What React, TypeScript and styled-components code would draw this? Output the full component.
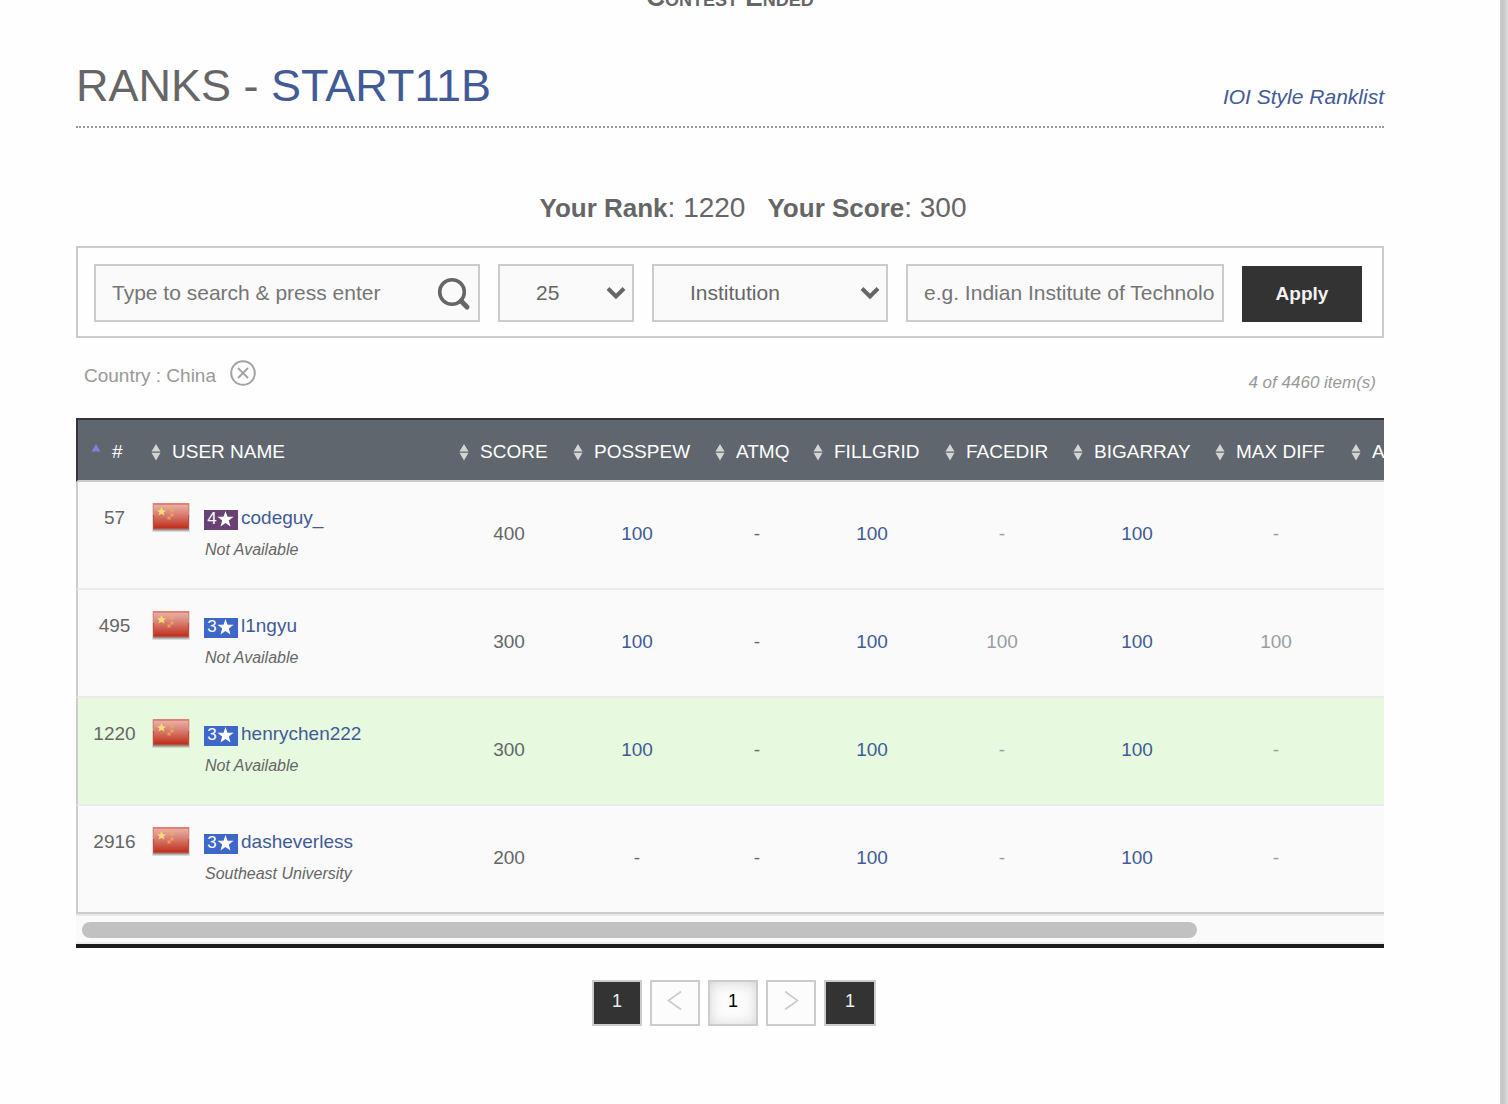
import React from "react";
import styled, { createGlobalStyle, css } from "styled-components";

const GlobalStyle = createGlobalStyle`
  *, *::before, *::after { box-sizing: border-box; }
  body {
    margin: 0;
    background: #fefefe;
    color: #666;
    font-family: "Liberation Sans", Arial, Helvetica, sans-serif;
    font-size: 19px;
  }
  button, input, select { font-family: inherit; }
  a { color: #425a96; text-decoration: none; }
`;

const Shell = styled.div`
  display: flex;
  min-height: 100vh;
`;

const Page = styled.main`
  flex: 1;
  min-width: 0;
  padding: 0 116px 76px 76px;
`;

const EdgeShadow = styled.div`
  width: 8px;
  border-left: 2px solid #cacaca;
  background: linear-gradient(to right, #bfbfbf, #e0e0e0);
`;

const Banner = styled.div`
  display: flex;
  align-items: flex-end;
  justify-content: center;
  height: 10px;
  overflow: hidden;
  font-size: 26px;
  line-height: 26px;
  font-weight: bold;
  font-variant: small-caps;
`;

const TitleRow = styled.header`
  display: flex;
  align-items: flex-end;
  justify-content: space-between;
  margin-top: 50px;
  padding-bottom: 14px;
  border-bottom: 2px dotted #999;
`;

const Title = styled.h1`
  margin: 0;
  font-size: 45px;
  line-height: 52px;
  font-weight: normal;
`;

const StyleLink = styled.a`
  font-size: 21px;
  line-height: 30px;
  font-style: italic;
`;

const Summary = styled.div`
  display: flex;
  justify-content: center;
  align-items: baseline;
  gap: 22px;
  margin-top: 64px;
  padding-left: 46px;
  font-size: 28px;
  line-height: 32px;

  b { font-size: 26px; }
`;

const Filters = styled.form`
  display: grid;
  grid-template-columns: 386fr 136px 236px 318fr 120px;
  column-gap: 18px;
  align-items: end;
  margin-top: 22px;
  padding: 16px 20px 14px 16px;
  border: 2px solid #ccc;
`;

const Field = styled.div`
  display: grid;
  align-items: center;

  > * { grid-area: 1 / 1; }
  > svg {
    justify-self: end;
    margin-right: 8px;
    pointer-events: none;
  }
`;

const control = css`
  width: 100%;
  height: 58px;
  border: 2px solid #ccc;
  border-radius: 0;
  background: #fafafa;
  color: #666;
  font-size: 21px;
  outline: none;
`;

const TextInput = styled.input<{ $icon?: boolean }>`
  ${control}
  padding: 0 ${(p) => (p.$icon ? "50px" : "8px")} 0 16px;

  &::placeholder { color: #757575; opacity: 1; }
`;

const Select = styled.select`
  ${control}
  appearance: none;
  padding: 0 30px 2px 36px;
`;

const ApplyButton = styled.button`
  height: 56px;
  border: 0;
  background: #333;
  color: #f2f2f2;
  font-size: 19px;
  font-weight: bold;
`;

const FilterInfo = styled.div`
  display: flex;
  justify-content: space-between;
  align-items: flex-start;
  height: 58px;
  margin-top: 22px;
  padding: 0 8px;
  color: #999;
`;

const Tag = styled.div`
  display: flex;
  align-items: flex-start;
  gap: 14px;
  line-height: 32px;
`;

const ClearButton = styled.button`
  display: flex;
  padding: 0;
  border: 0;
  background: none;
`;

const Count = styled.em`
  font-size: 17px;
  line-height: 46px;
`;

const TableFrame = styled.section`
  background: #fafafa;
  border-bottom: 4px solid #1c1c1e;
`;

const TableScroll = styled.div`
  overflow-x: auto;
  scrollbar-width: none;
  border-bottom: 2px solid #e8e8e8;
`;

const Table = styled.table`
  width: 1520px;
  table-layout: fixed;
  border-collapse: separate;
  border-spacing: 0;
`;

const HeadCell = styled.th<{ $first?: boolean }>`
  height: 64px;
  padding: 4px 0 0 ${(p) => (p.$first ? "13px" : "7px")};
  border-top: 2px solid #333436;
  border-bottom: 2px solid #ccc;
  border-left: ${(p) => (p.$first ? "2px solid #333436" : "0")};
  background: #5f666d;
  text-align: left;
`;

const SortButton = styled.button`
  display: flex;
  align-items: center;
  gap: 11px;
  padding: 0;
  border: 0;
  background: none;
  color: #fff;
  font-size: 19px;
  white-space: nowrap;
`;

const Row = styled.tr<{ $mine?: boolean }>`
  background: ${(p) => (p.$mine ? "#e7fadf" : "#fafafa")};

  td { border-bottom: 2px solid #ebebeb; }
  &:last-child td { border-bottom-color: #ccc; }
`;

const RankCell = styled.td`
  height: 108px;
  padding: 20px 0 0 7px;
  border-left: 2px solid #ccc;
  line-height: 32px;
  text-align: center;
  vertical-align: top;
`;

const UserCell = styled.td`
  padding: 20px 0 0 8px;
  vertical-align: top;
`;

const UserBox = styled.div`
  display: flex;
  gap: 14px;
  line-height: 32px;
`;

const UserName = styled.div`
  display: flex;
  align-items: center;
  gap: 3px;
`;

const Badge = styled.span<{ $stars: number }>`
  display: flex;
  align-items: center;
  justify-content: center;
  width: 34px;
  height: 20px;
  margin-top: 4px;
  padding: 0 1px 2px 0;
  background: ${(p) => (p.$stars === 4 ? "#684273" : "#3d67c8")};
  color: #fff;
  font-size: 17px;
  line-height: 18px;
`;

const School = styled.em`
  display: block;
  margin-top: 2px;
  padding-left: 1px;
  font-size: 16px;
  line-height: 28px;
`;

const ScoreCell = styled.td<{ $muted?: boolean }>`
  padding: 0 0 2px;
  text-align: center;
  color: ${(p) => (p.$muted ? "#999ea3" : "#666")};
`;

const Track = styled.div`
  padding: 6px 6px 4px;
  border-bottom: 2px solid #ededed;
`;

const Thumb = styled.div`
  width: 86%;
  height: 16px;
  border-radius: 8px;
  background: #c1c1c1;
`;

const Pager = styled.nav`
  display: flex;
  justify-content: center;
  gap: 8px;
  margin-top: 32px;
  padding-left: 8px;
`;

const PageButton = styled.button<{ $kind: "dark" | "arrow" | "current" }>`
  display: flex;
  align-items: center;
  justify-content: center;
  width: 50px;
  height: 46px;
  padding: 0 0 4px;
  border: 2px solid #ccc;
  font-size: 18px;
  background: ${(p) => (p.$kind === "dark" ? "#333" : "#fcfcfc")};
  color: ${(p) => (p.$kind === "dark" ? "#eee" : "#000")};
  box-shadow: ${(p) => (p.$kind === "current" ? "inset 0 1px 14px #d4d4d4" : "none")};

  &:last-child { width: 52px; }
`;

const SearchIcon = () => (
  <svg width="38" height="38" viewBox="0 0 38 38" fill="none" stroke="#666">
    <circle cx="18" cy="18" r="12.3" strokeWidth="3.6" />
    <path d="M27 27 L33 33" strokeWidth="5" strokeLinecap="round" />
  </svg>
);

const Chevron = () => (
  <svg width="20" height="14" viewBox="0 0 20 14" fill="none" stroke="#666" strokeWidth="4">
    <path d="M2 2.5 L10 10.5 L18 2.5" />
  </svg>
);

const ClearIcon = () => (
  <svg width="26" height="26" viewBox="0 0 26 26" fill="none" stroke="#a3a3a3">
    <circle cx="13" cy="13" r="11.8" strokeWidth="2" />
    <path d="M8 8 L18 18 M18 8 L8 18" strokeWidth="1.8" />
  </svg>
);

const SortIcon = ({ active }: { active?: boolean }) => (
  <svg width="10" height="18" viewBox="0 0 10 18">
    {active ? (
      <path d="M0.5 8.6 L5 1 L9.5 8.6 Z" fill="#8080e0" />
    ) : (
      <path d="M0.5 8.6 L5 1 L9.5 8.6 Z M0.5 9.8 L5 17.4 L9.5 9.8 Z" fill="#d4d4d4" />
    )}
  </svg>
);

const Star = () => (
  <svg width="17" height="16" viewBox="0 0 17 16" fill="#fff">
    <path d="M8.5 0 L10.5 5.7 L16.6 5.8 L11.8 9.5 L13.5 15.4 L8.5 11.9 L3.5 15.4 L5.2 9.5 L0.4 5.8 L6.5 5.7 Z" />
  </svg>
);

const smallStars = [[17, 5], [20, 8], [20, 13], [17, 16]];

const Flag = () => (
  <svg width="38" height="30" viewBox="0 0 38 30" role="img" aria-label="China">
    <defs>
      <linearGradient id="flagRed" x1="0" y1="0" x2="0" y2="1">
        <stop offset="0" stopColor="#e8b0a8" />
        <stop offset="0.5" stopColor="#d67365" />
        <stop offset="1" stopColor="#bf2f1c" />
      </linearGradient>
    </defs>
    <rect x="0" y="1" width="38" height="29" rx="1" fill="#000" opacity="0.12" />
    <rect x="1" y="3" width="36" height="25.5" rx="1" fill="#000" opacity="0.35" />
    <rect x="1" y="1" width="36" height="26" fill="#c94a38" />
    <rect x="1" y="1" width="36" height="12" fill="#e28072" />
    <rect x="2" y="3" width="34" height="23" fill="url(#flagRed)" />
    <path d="M9.5 5 L10.8 8.3 L14 8.4 L11.5 10.4 L12.4 13.6 L9.5 11.8 L6.6 13.6 L7.5 10.4 L5 8.4 L8.2 8.3 Z" fill="#f7e06d" />
    {smallStars.map(([x, y]) => (
      <rect key={y} x={x - 1.5} y={y - 1.5} width="3" height="3" fill="#ecb45c" opacity="0.7" />
    ))}
  </svg>
);

const ArrowIcon = ({ flip }: { flip?: boolean }) => (
  <svg width="16" height="22" viewBox="0 0 16 22" fill="none" stroke="#ccc" strokeWidth="1.8">
    <path d={flip ? "M2 1.5 L14.5 10.5 L2 19.5" : "M14 1.5 L1.5 10.5 L14 19.5"} />
  </svg>
);

const columns = [
  { label: "#", width: 68 },
  { label: "USER NAME", width: 308 },
  { label: "SCORE", width: 114 },
  { label: "POSSPEW", width: 142 },
  { label: "ATMQ", width: 98 },
  { label: "FILLGRID", width: 132 },
  { label: "FACEDIR", width: 128 },
  { label: "BIGARRAY", width: 142 },
  { label: "MAX DIFF", width: 136 },
  { label: "A", width: 252 },
];

// Problems that are not scored in this division are shown muted.
const mutedProblems = [3, 5];

const rows = [
  { rank: 57, stars: 4, user: "codeguy_", school: "Not Available", score: 400, cells: ["100", "-", "100", "-", "100", "-"] },
  { rank: 495, stars: 3, user: "l1ngyu", school: "Not Available", score: 300, cells: ["100", "-", "100", "100", "100", "100"] },
  { rank: 1220, stars: 3, user: "henrychen222", school: "Not Available", score: 300, mine: true, cells: ["100", "-", "100", "-", "100", "-"] },
  { rank: 2916, stars: 3, user: "dasheverless", school: "Southeast University", score: 200, cells: ["-", "-", "100", "-", "100", "-"] },
];

export default function App() {
  return (
    <Shell>
      <GlobalStyle />
      <Page>
        <Banner>Contest Ended</Banner>
        <TitleRow>
          <Title>
            RANKS - <a href="#contest">START11B</a>
          </Title>
          <StyleLink href="#ioi">IOI Style Ranklist</StyleLink>
        </TitleRow>

        <Summary>
          <span><b>Your Rank</b>: 1220</span>
          <span><b>Your Score</b>: 300</span>
        </Summary>

        <Filters onSubmit={(e) => e.preventDefault()}>
          <Field>
            <TextInput $icon aria-label="Search" placeholder="Type to search & press enter" />
            <SearchIcon />
          </Field>
          <Field>
            <Select aria-label="Items per page" defaultValue="25">
              <option>25</option>
            </Select>
            <Chevron />
          </Field>
          <Field>
            <Select aria-label="Filter by" defaultValue="Institution">
              <option>Institution</option>
            </Select>
            <Chevron />
          </Field>
          <TextInput aria-label="Filter value" placeholder="e.g. Indian Institute of Technology" />
          <ApplyButton type="submit">Apply</ApplyButton>
        </Filters>

        <FilterInfo>
          <Tag>
            Country : China
            <ClearButton type="button" aria-label="Remove filter"><ClearIcon /></ClearButton>
          </Tag>
          <Count>4 of 4460 item(s)</Count>
        </FilterInfo>

        <TableFrame>
          <TableScroll>
            <Table>
              <colgroup>
                {columns.map((c) => <col key={c.label} width={c.width} />)}
              </colgroup>
              <thead>
                <tr>
                  {columns.map((c, i) => (
                    <HeadCell key={c.label} $first={i === 0}>
                      <SortButton type="button">
                        <SortIcon active={i === 0} />
                        {c.label}
                      </SortButton>
                    </HeadCell>
                  ))}
                </tr>
              </thead>
              <tbody>
                {rows.map((r) => (
                  <Row key={r.rank} $mine={r.mine}>
                    <RankCell>{r.rank}</RankCell>
                    <UserCell>
                      <UserBox>
                        <Flag />
                        <div>
                          <UserName>
                            <Badge $stars={r.stars}>{r.stars}<Star /></Badge>
                            <a href={`#${r.user}`}>{r.user}</a>
                          </UserName>
                          <School>{r.school}</School>
                        </div>
                      </UserBox>
                    </UserCell>
                    <ScoreCell>{r.score}</ScoreCell>
                    {r.cells.map((v, i) => {
                      const muted = mutedProblems.includes(i);
                      return (
                        <ScoreCell key={i} $muted={muted}>
                          {v !== "-" && !muted ? <a href="#solution">{v}</a> : v}
                        </ScoreCell>
                      );
                    })}
                    <ScoreCell />
                  </Row>
                ))}
              </tbody>
            </Table>
          </TableScroll>
          <Track><Thumb /></Track>
        </TableFrame>

        <Pager aria-label="Pages">
          <PageButton type="button" $kind="dark">1</PageButton>
          <PageButton type="button" $kind="arrow" aria-label="Previous"><ArrowIcon /></PageButton>
          <PageButton type="button" $kind="current">1</PageButton>
          <PageButton type="button" $kind="arrow" aria-label="Next"><ArrowIcon flip /></PageButton>
          <PageButton type="button" $kind="dark">1</PageButton>
        </Pager>
      </Page>
      <EdgeShadow />
    </Shell>
  );
}
